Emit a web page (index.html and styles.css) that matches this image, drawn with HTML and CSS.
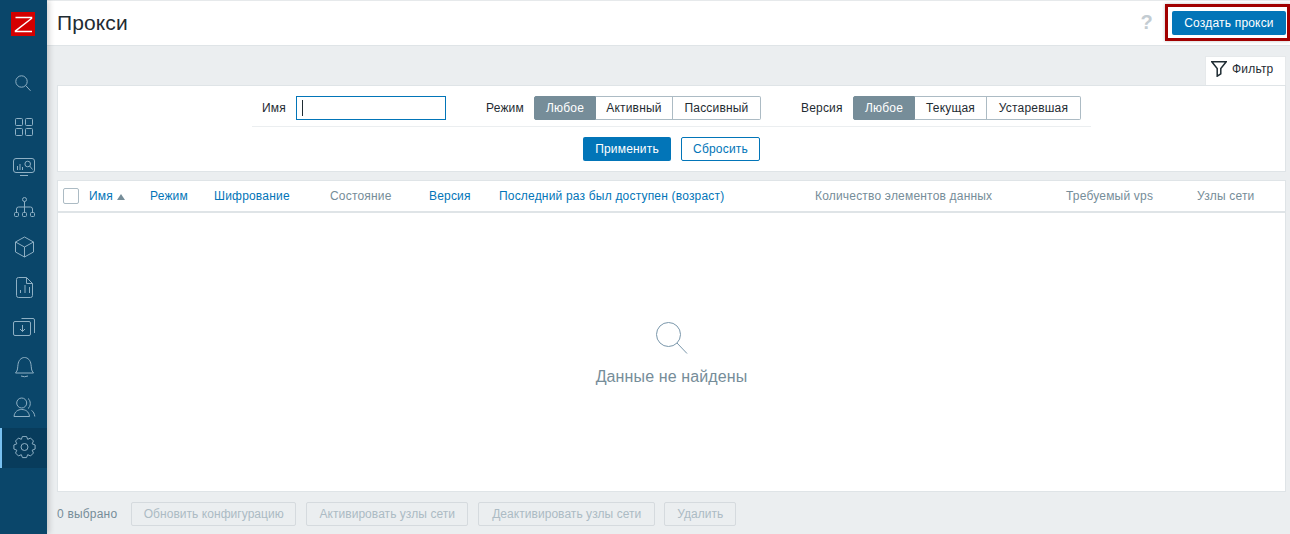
FILE: index.html
```html
<!DOCTYPE html>
<html lang="ru">
<head>
<meta charset="utf-8">
<title>Прокси</title>
<link rel="stylesheet" href="styles.css">
</head>
<body>
<aside class="sidebar">
  <div class="logo"><svg width="24" height="24" viewBox="0 0 24 24"><rect width="24" height="24" fill="#d40000"/><path d="M4.500 5.500H20.500V6.500L4.500 18.800V19.500H21" fill="none" stroke="#fff" stroke-width="1.500"/></svg></div>
  <nav class="nav">
    <a class="nav-item nav-search"><svg class="ico" viewBox="0 0 24 24"><circle cx="8.500" cy="9.500" r="5.700"/><path d="M12.700 13.500L17.500 18.800"/></svg></a>
    <a class="nav-item"><svg class="ico" viewBox="0 0 24 24"><rect x="2.500" y="2.500" width="7" height="7" rx="1"/><rect x="12.500" y="2.500" width="7" height="7" rx="1"/><rect x="2.500" y="12.500" width="7" height="7" rx="1"/><rect x="12.500" y="12.500" width="7" height="7" rx="1"/></svg></a>
    <a class="nav-item"><svg class="ico" viewBox="0 0 24 24"><rect x="0.500" y="2.500" width="21" height="14" rx="2.500"/><path d="M7 19.500H15M4.500 14V10M7 14V8M9.500 14V11"/><circle cx="14.700" cy="8" r="2.800"/><path d="M16.700 10L19.500 13.500"/></svg></a>
    <a class="nav-item"><svg class="ico" viewBox="0 0 24 24"><circle cx="11.500" cy="3.500" r="2"/><path d="M11.500 5.500V16M3.500 16V13Q3.500 11 5.500 11H17.500Q19.500 11 19.500 13V16"/><rect x="1.500" y="16.500" width="4" height="4" rx="1"/><rect x="9.500" y="16.500" width="4" height="4" rx="1"/><rect x="17.500" y="16.500" width="4" height="4" rx="1"/></svg></a>
    <a class="nav-item"><svg class="ico" viewBox="0 0 24 24"><path d="M11.500 1L20.500 6V16L11.500 21L2.500 16V6ZM2.500 6L11.500 11L20.500 6M11.500 11V21"/></svg></a>
    <a class="nav-item"><svg class="ico" viewBox="0 0 24 24"><path d="M5.500 1.500H13.500L19.500 7.500V19.500Q19.500 21.500 17.500 21.500H5.500Q3.500 21.500 3.500 19.500V3.500Q3.500 1.500 5.500 1.500ZM13.500 1.500V7.500H19.500M7.500 17V14M12 17V9M16.500 17V11"/></svg></a>
    <a class="nav-item"><svg class="ico" viewBox="0 0 24 24"><rect x="0.500" y="5.500" width="17" height="14" rx="1.500"/><path d="M8.500 2.500H20Q21.500 2.500 21.500 4V17M9.500 9V15.500M7 13L9.500 15.500L12 13"/></svg></a>
    <a class="nav-item"><svg class="ico" viewBox="0 0 24 24"><path d="M2.500 17H20.500C18 14.500 18.500 11.500 18 8.500C17.500 4.500 15 1.500 11.500 1.500C8 1.500 5.500 4.500 5 8.500C4.500 11.500 5 14.500 2.500 17ZM8 20Q11.500 21.500 15 20"/></svg></a>
    <a class="nav-item"><svg class="ico" viewBox="0 0 24 24"><circle cx="8.700" cy="7" r="5"/><path d="M1 20.500C1.500 15.500 5 13.500 8.700 13.500C12.500 13.500 16 15.500 16.500 20.500ZM15 2.500C18 4.500 18 10.500 15 12.500M18.500 14.500C20.500 15.500 21.500 18 21.800 20.500"/></svg></a>
    <a class="nav-item is-active"><svg class="ico" viewBox="0 0 24 24"><g transform="translate(11.500 11)"><circle r="3.500"/><polygon points="10.600,-2.060 10.600,2.060 7.670,3.180 8.950,6.040 6.040,8.950 3.180,7.670 2.060,10.600 -2.060,10.600 -3.180,7.670 -6.040,8.950 -8.950,6.040 -7.670,3.180 -10.600,2.060 -10.600,-2.060 -7.670,-3.180 -8.950,-6.040 -6.040,-8.950 -3.180,-7.670 -2.060,-10.600 2.060,-10.600 3.180,-7.670 6.040,-8.950 8.950,-6.040 7.670,-3.180"/></g></svg></a>
  </nav>
</aside>
<div class="page">
  <header class="topbar">
    <h1 class="title">Прокси</h1>
    <span class="help">?</span>
    <span class="highlight"><button class="btn btn-primary btn-create">Создать прокси</button></span>
  </header>
  <main class="content">
    <div class="tab-row">
      <div class="filter-tab"><svg class="filter-ico" viewBox="0 0 16 16"><path d="M0.800 0.800H15.200L9.800 7.500V12.800L6.200 15.200V7.500Z"/></svg>Фильтр</div>
    </div>
    <section class="filter">
      <div class="filter-fields">
        <label class="flabel flabel-name">Имя</label>
        <div class="input"><span class="caret"></span></div>
        <label class="flabel flabel-mode">Режим</label>
        <div class="seg">
          <span class="seg-item is-on seg-any">Любое</span><span class="seg-item seg-active">Активный</span><span class="seg-item seg-passive">Пассивный</span>
        </div>
        <label class="flabel flabel-ver">Версия</label>
        <div class="seg">
          <span class="seg-item is-on seg-any">Любое</span><span class="seg-item seg-cur">Текущая</span><span class="seg-item seg-old">Устаревшая</span>
        </div>
      </div>
      <div class="filter-actions">
        <button class="btn btn-primary btn-apply">Применить</button>
        <button class="btn btn-outline">Сбросить</button>
      </div>
    </section>
    <section class="table">
      <div class="thead">
        <span class="check"></span>
        <span class="col col-name link">Имя<i class="sort"></i></span>
        <span class="col col-mode link">Режим</span>
        <span class="col col-enc link">Шифрование</span>
        <span class="col col-state">Состояние</span>
        <span class="col col-ver link">Версия</span>
        <span class="col col-last link">Последний раз был доступен (возраст)</span>
        <span class="col col-items">Количество элементов данных</span>
        <span class="col col-vps">Требуемый vps</span>
        <span class="col col-hosts">Узлы сети</span>
      </div>
      <div class="empty">
        <svg class="empty-ico" viewBox="0 0 32 32"><circle cx="12.500" cy="12.500" r="12"/><path d="M21 21L31 31.500"/></svg>
        <div class="empty-text">Данные не найдены</div>
      </div>
    </section>
    <footer class="actions">
      <span class="count">0 выбрано</span>
      <button class="btn btn-off btn-refresh">Обновить конфигурацию</button>
      <button class="btn btn-off btn-enable">Активировать узлы сети</button>
      <button class="btn btn-off btn-disable">Деактивировать узлы сети</button>
      <button class="btn btn-off btn-delete">Удалить</button>
    </footer>
  </main>
</div>
</body>
</html>
```
FILE: styles.css
```css
* { box-sizing: border-box; }
html, body { height: 100%; }
body {
  margin: 0;
  display: flex;
  height: 534px;
  overflow: hidden;
  background: #ebeef0;
  font-family: "Liberation Sans", Arial, sans-serif;
  font-size: 12px;
  letter-spacing: .19px;
  color: #1f2c33;
}
.sidebar {
  width: 47px;
  flex: none;
  background: #0a466a;
  box-shadow: 2px 0 6px rgba(0,0,0,.18);
  position: relative;
  z-index: 2;
}
.logo { display: flex; padding: 12px 0 0 11px; height: 64px; }
.nav { display: flex; flex-direction: column; }
.nav-item {
  height: 40px;
  display: flex;
  align-items: center;
  border-left: 2px solid transparent;
  padding-left: 11px;
}
.nav-search { margin-bottom: 4px; }
.nav-item.is-active { background: #083c5c; border-left-color: #78c0f0; }
.ico {
  width: 24px;
  height: 24px;
  fill: none;
  stroke: #8fb0c4;
  stroke-width: 1;
}
.page { flex: 1; min-width: 0; display: flex; flex-direction: column; }
.topbar {
  height: 46px;
  background: #fff;
  border-top: 1px solid #e6e9eb;
  border-bottom: 1px solid #dfe4e7;
  display: flex;
  align-items: flex-start;
  padding-left: 10px;
}
.title { margin: 0; font-size: 21px; font-weight: 400; letter-spacing: .1px; color: #1f2c33; flex: 1; line-height: 44px; }
.help { font-size: 20px; font-weight: 700; line-height: 42px; color: #c3ccd2; margin-right: 12px; }
.highlight {
  border: 3px solid #a10000;
  padding: 4px 1px 3px 4px;
  margin-top: 3px;
  display: flex;
  box-shadow: 0 0 3px rgba(0,0,0,.25);
}
.btn {
  font: 12px "Liberation Sans", Arial, sans-serif;
  letter-spacing: .19px;
  height: 24px;
  border-radius: 2px;
  padding: 0;
  border: 1px solid transparent;
  white-space: nowrap;
}
.btn-primary { background: #0275b8; color: #fff; }
.btn-create { width: 114px; }
.content { flex: 1; padding: 10px 4px 0 10px; display: flex; flex-direction: column; }
.tab-row { display: flex; justify-content: flex-end; height: 29px; }
.filter-tab {
  width: 81px;
  background: #fff;
  border: 1px solid #e6e9eb;
  border-bottom: 0;
  display: flex;
  align-items: center;
  padding: 0 0 5px 5px;
  gap: 5px;
  white-space: nowrap;
  color: #1f2c33;
}
.filter-ico { width: 16px; height: 16px; fill: none; stroke: #1f2c33; stroke-width: 1.500; }
.filter {
  height: 87px;
  background: #fff;
  border: 1px solid #dfe4e7;
  padding-top: 10px;
}
.filter-fields {
  width: 839px;
  height: 31px;
  margin-left: 194px;
  display: flex;
  align-items: flex-start;
  border-bottom: 1px solid #ebeef0;
}
.flabel { line-height: 24px; white-space: nowrap; margin-right: 10px; }
.flabel-name { margin-left: 10px; width: 24px; }
.flabel-mode { margin-left: 40px; width: 38px; }
.flabel-ver { margin-left: 40px; width: 42px; }
.input { width: 150px; height: 24px; border: 1px solid #0275b8; padding: 3px 0 0 5px; }
.caret { display: block; width: 1px; height: 16px; background: #1f2c33; }
.seg { display: flex; }
.seg-item {
  height: 24px;
  line-height: 22px;
  text-align: center;
  border: 1px solid #acbbc4;
  border-left-width: 0;
  color: #1f2c33;
}
.seg-item:last-child { border-radius: 0 2px 2px 0; }
.seg-item.is-on {
  background: #768d99;
  border: 1px solid #768d99;
  color: #fff;
  border-radius: 2px 0 0 2px;
}
.seg-any { width: 62px; }
.seg-active { width: 77px; }
.seg-passive { width: 88px; }
.seg-cur { width: 72px; }
.seg-old { width: 94px; }
.filter-actions { display: flex; justify-content: center; gap: 10px; padding-top: 10px; }
.btn-apply { width: 88px; }
.btn-outline { width: 79px; background: #fff; border-color: #0275b8; color: #0275b8; }
.table {
  margin-top: 8px;
  height: 312px;
  background: #fff;
  border: 1px solid #dfe4e7;
  display: flex;
  flex-direction: column;
}
.thead {
  height: 32px;
  border-bottom: 2px solid #dfe4e7;
  display: grid;
  grid-template-columns: 26px 61px 64px 116px 99px 70px 316px 251px 131px 1fr;
  align-items: center;
  padding-left: 5px;
  color: #768d99;
}
.check { width: 16px; height: 16px; border: 1px solid #acbbc4; border-radius: 2px; }
.col { white-space: nowrap; line-height: 30px; }
.link { color: #0275b8; }
.sort { display: inline-block; margin-left: 4px; border: 4px solid transparent; border-bottom: 6px solid #768d99; border-top: 0; }
.empty { flex: 1; display: flex; flex-direction: column; align-items: center; padding-top: 109px; }
.empty-ico { width: 32px; height: 32px; fill: none; stroke: #7a97ab; stroke-width: 1; overflow: visible; }
.empty-text { margin-top: 12px; font-size: 16px; letter-spacing: .12px; color: #768d99; line-height: 22px; }
.actions { display: flex; align-items: center; height: 24px; margin-top: 10px; }
.count { color: #768d99; margin-right: 14px; }
.btn-off { background: #ebeef0; border-color: #d5dade; color: #acbbc4; margin-right: 10px; letter-spacing: .05px; }
.btn-refresh { width: 165px; }
.btn-enable { width: 162px; }
.btn-disable { width: 177px; margin-right: 9px; }
.btn-delete { width: 72px; }
```
